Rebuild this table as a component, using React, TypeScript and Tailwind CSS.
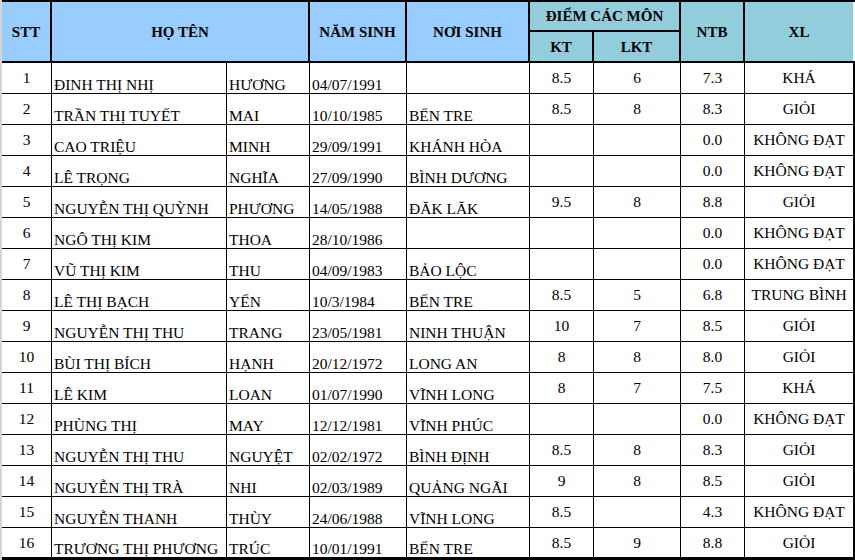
const rows: string[][] = [
  ['1', 'ĐINH THỊ NHỊ', 'HƯƠNG', '04/07/1991', '', '8.5', '6', '7.3', 'KHÁ'],
  ['2', 'TRẦN THỊ TUYẾT', 'MAI', '10/10/1985', 'BẾN TRE', '8.5', '8', '8.3', 'GIỎI'],
  ['3', 'CAO TRIỆU', 'MINH', '29/09/1991', 'KHÁNH HÒA', '', '', '0.0', 'KHÔNG ĐẠT'],
  ['4', 'LÊ TRỌNG', 'NGHĨA', '27/09/1990', 'BÌNH DƯƠNG', '', '', '0.0', 'KHÔNG ĐẠT'],
  ['5', 'NGUYỄN THỊ QUỲNH', 'PHƯƠNG', '14/05/1988', 'ĐĂK LĂK', '9.5', '8', '8.8', 'GIỎI'],
  ['6', 'NGÔ THỊ KIM', 'THOA', '28/10/1986', '', '', '', '0.0', 'KHÔNG ĐẠT'],
  ['7', 'VŨ THỊ KIM', 'THU', '04/09/1983', 'BẢO LỘC', '', '', '0.0', 'KHÔNG ĐẠT'],
  ['8', 'LÊ THỊ BẠCH', 'YẾN', '10/3/1984', 'BẾN TRE', '8.5', '5', '6.8', 'TRUNG BÌNH'],
  ['9', 'NGUYỄN THỊ THU', 'TRANG', '23/05/1981', 'NINH THUẬN', '10', '7', '8.5', 'GIỎI'],
  ['10', 'BÙI THỊ BÍCH', 'HẠNH', '20/12/1972', 'LONG AN', '8', '8', '8.0', 'GIỎI'],
  ['11', 'LÊ KIM', 'LOAN', '01/07/1990', 'VĨNH LONG', '8', '7', '7.5', 'KHÁ'],
  ['12', 'PHÙNG THỊ', 'MAY', '12/12/1981', 'VĨNH PHÚC', '', '', '0.0', 'KHÔNG ĐẠT'],
  ['13', 'NGUYỄN THỊ THU', 'NGUYỆT', '02/02/1972', 'BÌNH ĐỊNH', '8.5', '8', '8.3', 'GIỎI'],
  ['14', 'NGUYỄN THỊ TRÀ', 'NHI', '02/03/1989', 'QUẢNG NGÃI', '9', '8', '8.5', 'GIỎI'],
  ['15', 'NGUYỄN THANH', 'THÙY', '24/06/1988', 'VĨNH LONG', '8.5', '', '4.3', 'KHÔNG ĐẠT'],
  ['16', 'TRƯƠNG THỊ PHƯƠNG', 'TRÚC', '10/01/1991', 'BẾN TRE', '8.5', '9', '8.8', 'GIỎI'],
]

// width + alignment per column (text columns sit on the bottom, numbers in the middle)
const cols = [
  { w: 'w-[50px]', c: 'justify-center items-center' },
  { w: 'w-[175px]', c: 'items-end pl-[2px] pb-[1px]' },
  { w: 'w-[83px]', c: 'items-end pl-[2px] pb-[1px]' },
  { w: 'w-[97px]', c: 'items-end pl-[2px] pb-[1px]' },
  { w: 'w-[123px]', c: 'items-end pl-[2px] pb-[1px]' },
  { w: 'w-[64px]', c: 'justify-center items-center' },
  { w: 'w-[87px]', c: 'justify-center items-center' },
  { w: 'w-[64px]', c: 'justify-center items-center' },
  { w: 'w-[110px]', c: 'justify-center items-center' },
]

function HeadCell({ className, children }: { className: string; children?: React.ReactNode }) {
  return (
    <div className={`flex items-center justify-center font-bold text-[15px] ${className}`}>
      {children}
    </div>
  )
}

export default function App() {
  return (
    <div className="w-[855px] h-[560px] bg-white border-l-2 border-[#d4d4d4] font-['Liberation_Serif','Times_New_Roman',serif] text-[15.5px] leading-none text-black overflow-hidden">
      {/* Header */}
      <div className="flex h-[63px] border-t-2 border-b-2 border-black">
        <HeadCell className="w-[50px] border-r-2 border-black bg-[#99ccff] pt-[2px]">STT</HeadCell>
        <HeadCell className="w-[258px] border-r-2 border-black bg-[#99ccff] pt-[2px]">HỌ TÊN</HeadCell>
        <HeadCell className="w-[97px] border-r-2 border-black bg-[#99ccff] pt-[2px]">NĂM SINH</HeadCell>
        <HeadCell className="w-[123px] border-r-2 border-black bg-[#99ccff] pt-[2px]">NƠI SINH</HeadCell>
        <div className="w-[151px] flex flex-col border-r-2 border-black bg-[#92cddc]">
          <HeadCell className="h-[30px] border-b-2 border-black">ĐIỂM CÁC MÔN</HeadCell>
          <div className="flex flex-1">
            <HeadCell className="w-[64px] border-r-2 border-black pt-[2px]">KT</HeadCell>
            <HeadCell className="flex-1 pt-[2px]">LKT</HeadCell>
          </div>
        </div>
        <HeadCell className="w-[64px] border-r-2 border-black bg-[#92cddc] pt-[2px]">NTB</HeadCell>
        <HeadCell className="w-[108px] bg-[#92cddc] pt-[2px]">XL</HeadCell>
        <div className="w-[2px] bg-white" />
      </div>

      {/* Rows */}
      {rows.map((r, i) => {
        const last = i === rows.length - 1
        return (
          <div
            key={r[0]}
            className={`flex border-black ${last ? 'h-[32px] border-b-[3px]' : 'h-[31px] border-b'}`}
          >
            {r.map((v, j) => (
              <div
                key={j}
                className={`flex whitespace-nowrap overflow-hidden ${cols[j].w} ${cols[j].c} ${
                  j === 8 ? 'border-r-2' : 'border-r'
                } border-black`}
              >
                {v}
              </div>
            ))}
          </div>
        )
      })}
    </div>
  )
}
